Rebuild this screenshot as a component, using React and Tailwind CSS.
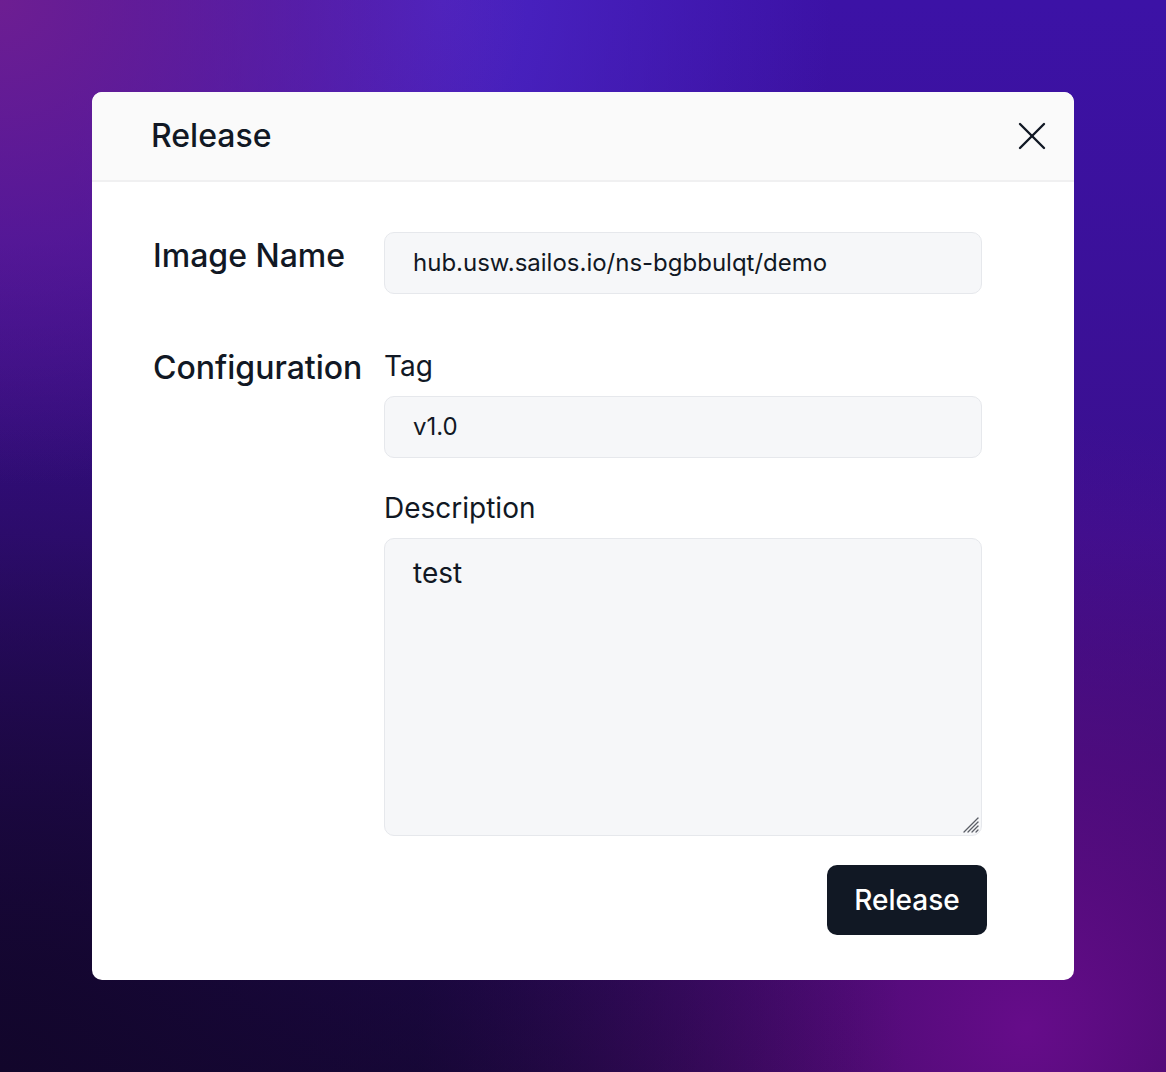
const FONT = "font-['Inter','Noto_Sans',sans-serif]"

const CloseIcon = () => (
  <svg width="28" height="28" viewBox="0 0 28 28" fill="none" stroke="#111824" strokeWidth="2.4" strokeLinecap="round">
    <path d="M2 2 26 26" />
    <path d="M26 2 2 26" />
  </svg>
)

const ResizeGrip = () => (
  <svg
    className="pointer-events-none absolute bottom-[3px] right-[3px]"
    width="18"
    height="18"
    viewBox="0 0 18 18"
    fill="none"
    stroke="#5b5e66"
    strokeWidth="1.3"
    strokeLinecap="round"
  >
    <path d="M17 3 3 17" />
    <path d="M17 7 7 17" />
    <path d="M17 11 11 17" />
    <path d="M17 15 15 17" />
  </svg>
)

const Field = ({ children }) => (
  <div className="flex h-[62px] items-center rounded-[10px] border border-[#e6e8ec] bg-[#f6f7f9] px-[28px] text-[24px] text-[#111824]">
    {children}
  </div>
)

const App = () => {
  return (
    <div
      className={`${FONT} flex h-[1072px] w-full items-center justify-center bg-[radial-gradient(ellipse_at_0%_0%,#6d1e92_0%,transparent_32%),radial-gradient(ellipse_at_38%_0%,#4a24c4_0%,transparent_38%),radial-gradient(ellipse_at_0%_100%,#12062b_0%,transparent_55%),radial-gradient(ellipse_at_88%_96%,#660c8a_0%,transparent_42%),linear-gradient(to_bottom,#3c12a6_0%,#3a0f8e_50%,#1c0844_100%)]`}
    >
      <div className="w-[982px] overflow-hidden rounded-[10px] bg-white">
        {/* Header */}
        <div className="flex h-[90px] items-center justify-between border-b-2 border-[#f0f0f1] bg-[#fafafa] pl-[59px] pr-[28px]">
          <h1 className="text-[32px] font-medium text-[#111824]">Release</h1>
          <CloseIcon />
        </div>

        {/* Body */}
        <div className="pb-[45px] pl-[61px] pr-[92px] pt-[50px]">
          <div className="flex items-start">
            <div className="w-[231px] text-[32px] font-medium leading-[48px] text-[#111824]">Image Name</div>
            <div className="flex-1">
              <Field>hub.usw.sailos.io/ns-bgbbulqt/demo</Field>
            </div>
          </div>

          <div className="mt-[50px] flex items-start">
            <div className="w-[231px] text-[32px] font-medium leading-[48px] text-[#111824]">Configuration</div>
            <div className="flex-1 pt-[1px]">
              <div className="mb-[9px] text-[28px] leading-[42px] text-[#111824]">Tag</div>
              <Field>v1.0</Field>
              <div className="mb-[9px] mt-[29px] text-[28px] leading-[42px] text-[#111824]">Description</div>
              <div className="relative">
                <textarea
                  defaultValue="test"
                  className="block h-[298px] w-full resize-none rounded-[10px] border border-[#e6e8ec] bg-[#f6f7f9] px-[28px] pt-[13px] text-[28px] leading-[42px] text-[#111824] outline-none"
                />
                <ResizeGrip />
              </div>
              <div className="mt-[29px] flex justify-end">
                <button className="-mr-[5px] flex h-[70px] w-[160px] items-center justify-center rounded-[10px] bg-[#111824] text-[28px] font-medium text-white">
                  Release
                </button>
              </div>
            </div>
          </div>
        </div>
      </div>
    </div>
  )
}

export default App
